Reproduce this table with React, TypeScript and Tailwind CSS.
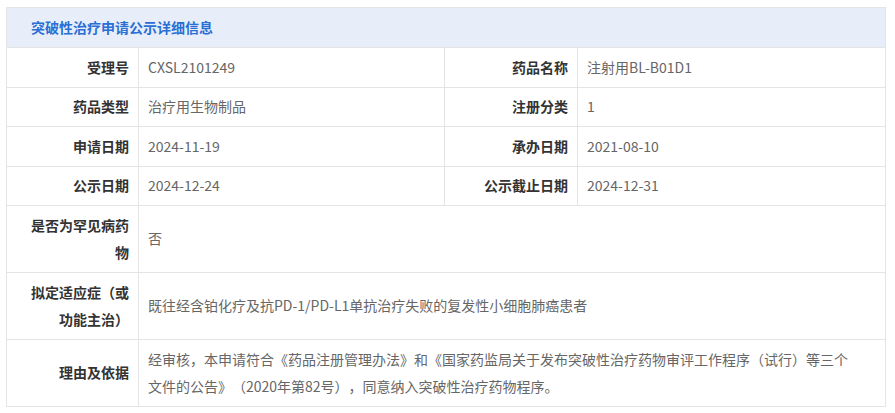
const rows: [string, string, string, string][] = [
  ['受理号', 'CXSL2101249', '药品名称', '注射用BL-B01D1'],
  ['药品类型', '治疗用生物制品', '注册分类', '1'],
  ['申请日期', '2024-11-19', '承办日期', '2021-08-10'],
  ['公示日期', '2024-12-24', '公示截止日期', '2024-12-31'],
];

const labelCls =
  'border border-[#e4e4e4] pl-[12px] pr-[9px] py-[5.5px] text-right align-middle font-bold text-[#333] leading-[27.5px]';
const valueCls =
  'border border-[#e4e4e4] pl-[9px] pr-[8px] py-[5.5px] text-left align-middle text-[#666] leading-[27.5px]';

export default function App() {
  return (
    <div
      className="bg-white pl-[6px] pr-[10px] pt-[7px] pb-[6px] text-[14px] [text-spacing-trim:space-all]"
      style={{ fontFamily: '"Noto Sans CJK SC", "Noto Sans", sans-serif' }}
    >
      <table className="w-full table-fixed border-collapse">
        <colgroup>
          <col className="w-[132px]" />
          <col className="w-[306px]" />
          <col className="w-[133px]" />
          <col className="w-[308px]" />
        </colgroup>
        <tbody>
          <tr>
            <td
              colSpan={4}
              className="h-[40px] border border-[#e4e4e4] bg-[#e7eef9] pl-[24px] font-bold text-[#2a6fd4]"
            >
              突破性治疗申请公示详细信息
            </td>
          </tr>
          {rows.map((r) => (
            <tr key={r[0]}>
              <td className={labelCls}>{r[0]}</td>
              <td className={valueCls}>{r[1]}</td>
              <td className={labelCls}>{r[2]}</td>
              <td className={valueCls}>{r[3]}</td>
            </tr>
          ))}
          <tr>
            <td className={labelCls}>
              是否为罕见病药
              <br />
              物
            </td>
            <td colSpan={3} className={valueCls}>
              否
            </td>
          </tr>
          <tr>
            <td className={labelCls}>
              拟定适应症（或
              <br />
              功能主治）
            </td>
            <td colSpan={3} className={valueCls}>
              既往经含铂化疗及抗PD-1/PD-L1单抗治疗失败的复发性小细胞肺癌患者
            </td>
          </tr>
          <tr>
            <td className={labelCls}>理由及依据</td>
            <td colSpan={3} className={`${valueCls} whitespace-nowrap`}>
              经审核，本申请符合《药品注册管理办法》和《国家药监局关于发布突破性治疗药物审评工作程序（试行）等三个
              <br />
              文件的公告》（2020年第82号），同意纳入突破性治疗药物程序。
            </td>
          </tr>
        </tbody>
      </table>
    </div>
  );
}
